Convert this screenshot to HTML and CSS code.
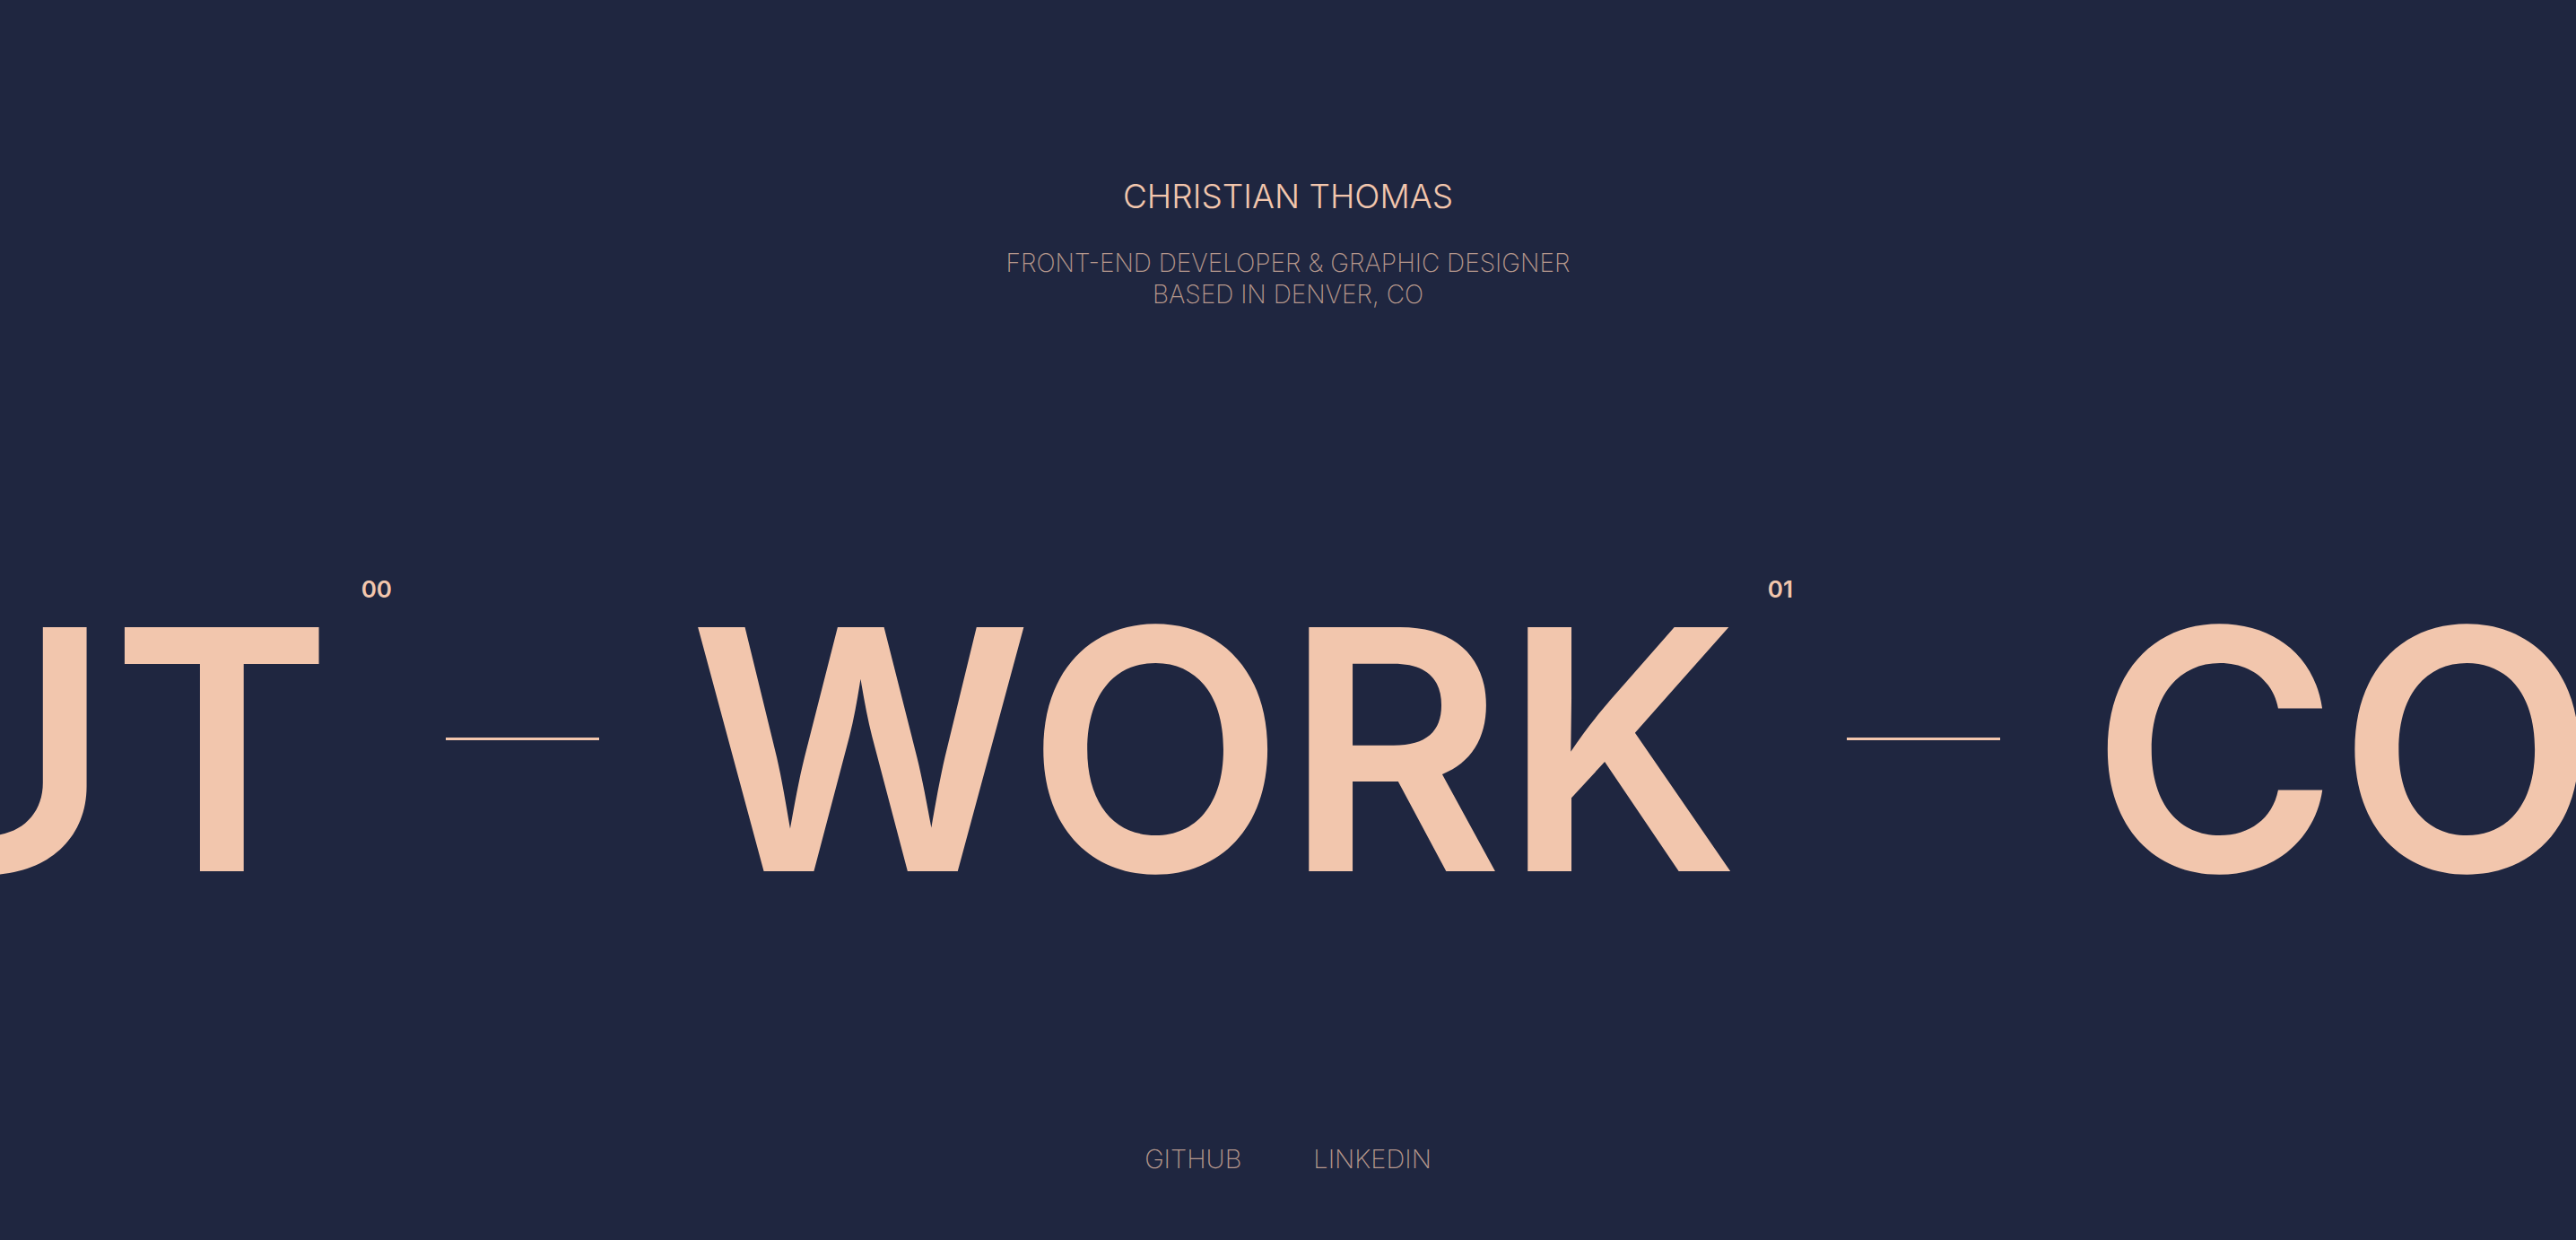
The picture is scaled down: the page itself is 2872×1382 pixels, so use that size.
FILE: index.html
```html
<!DOCTYPE html>
<html lang="en">
<head>
<meta charset="utf-8">
<title>Christian Thomas</title>
<link rel="stylesheet" href="styles.css">
</head>
<body>
<div class="page">
  <header class="intro">
    <h1 class="name">CHRISTIAN THOMAS</h1>
    <p class="role">FRONT-END DEVELOPER &amp; GRAPHIC DESIGNER<br>BASED IN DENVER, CO</p>
  </header>

  <nav class="marquee">
    <div class="lead">
      <a class="item" href="#about"><span class="word">ABOUT</span><span class="num">00</span></a>
      <span class="sep"></span>
    </div>
    <a class="item" href="#work"><span class="word">WORK</span><span class="num">01</span></a>
    <span class="sep"></span>
    <a class="item" href="#contact"><span class="word">CONTACT</span><span class="num">02</span></a>
  </nav>

  <footer class="links">
    <a class="link" href="#github">GITHUB</a>
    <a class="link" href="#linkedin">LINKEDIN</a>
  </footer>
</div>
</body>
</html>
```

FILE: styles.css
```css
html, body {
  margin: 0;
  padding: 0;
  background: #1f2640;
}

body {
  width: 100%;
  height: 100vh;
  overflow: hidden;
  font-family: Inter, "Noto Sans", sans-serif;
  color: #f2c6ad;
}

.page {
  display: flex;
  flex-direction: column;
  height: 100vh;
}

.intro {
  padding-top: 196px;
  text-align: center;
}

.name {
  margin: 0;
  font-size: 37px;
  line-height: 46px;
  font-weight: 300;
  color: #f2c6ad;
}

.role {
  margin: 34px 0 0;
  font-size: 28px;
  line-height: 35px;
  font-weight: 200;
  color: rgba(242, 198, 173, 0.72);
}

.marquee {
  display: flex;
  flex-wrap: nowrap;
  align-items: flex-start;
  margin-top: 302px;
  height: 374px;
  white-space: nowrap;
}

.lead {
  flex: 0 0 769px;
  min-width: 0;
  width: 769px;
  display: flex;
  justify-content: flex-end;
  align-items: flex-start;
}

.item {
  display: flex;
  align-items: flex-start;
  flex: none;
  text-decoration: none;
  color: #f2c6ad;
}

.word {
  font-size: 374px;
  line-height: 1;
  font-weight: 600;
  letter-spacing: 0;
}

.num {
  margin-left: 32px;
  margin-top: -4px;
  font-size: 26px;
  line-height: 1;
  font-weight: 600;
}

.sep {
  flex: none;
  width: 171px;
  height: 3px;
  margin: 174px 101px 0 60px;
  background: #f2c6ad;
}

.links {
  display: flex;
  justify-content: center;
  gap: 80px;
  margin-top: 253px;
}

.link {
  font-size: 29px;
  line-height: 1.2;
  font-weight: 200;
  text-decoration: none;
  color: rgba(242, 198, 173, 0.72);
}
```
